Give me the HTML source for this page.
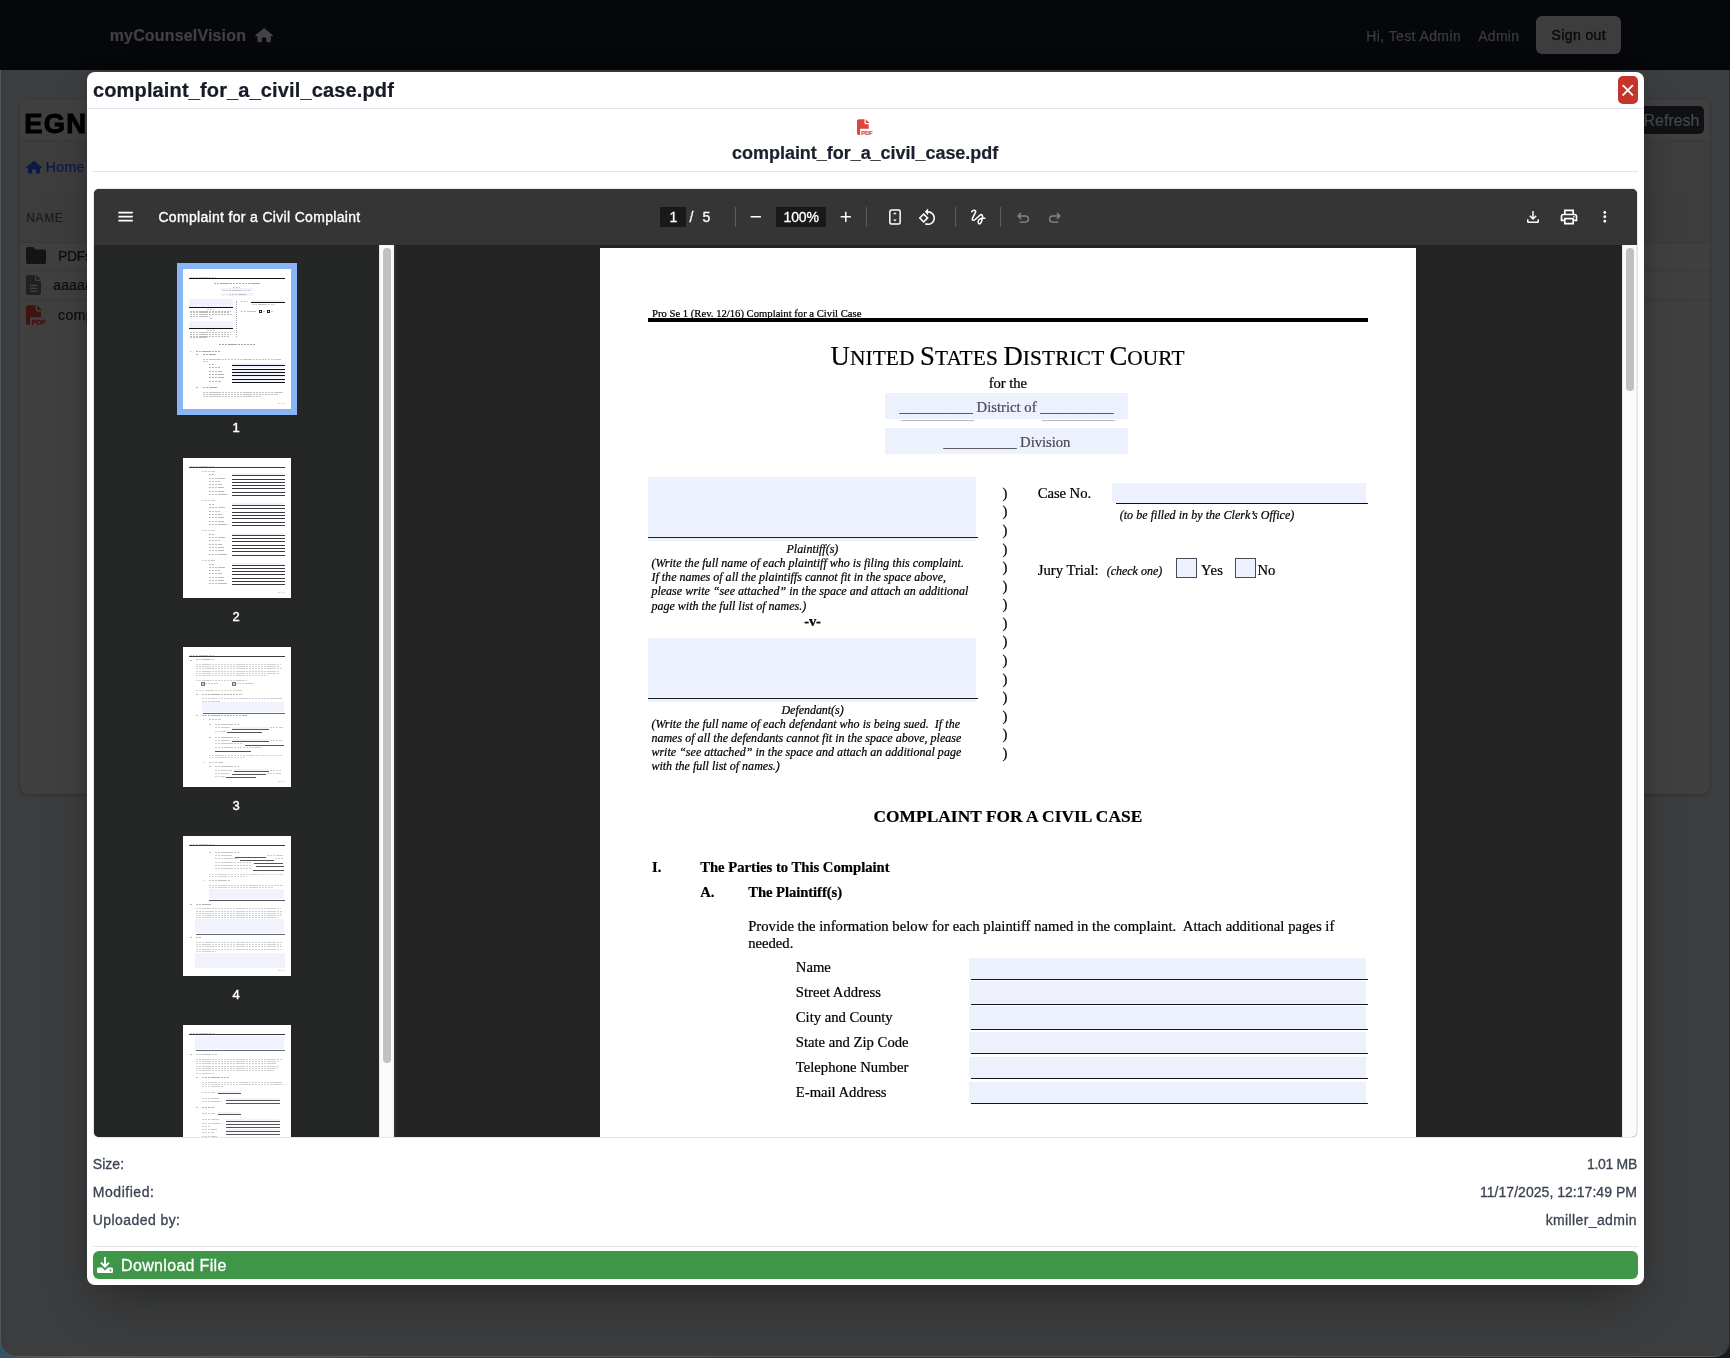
<!DOCTYPE html>
<html><head><meta charset="utf-8"><title>complaint_for_a_civil_case.pdf</title><style>
html,body{margin:0;padding:0}
body{width:1730px;height:1358px;overflow:hidden;position:relative;background:linear-gradient(90deg,#2b5568 0,#3f6b72 5%,#24424d 25%,#1c2f36 60%,#1d2a30 92%,#151b1e 100%);font-family:'Liberation Serif',serif;color:#000}
#win{will-change:transform;position:absolute;left:0;top:0;width:1730px;height:1356.500px;background:#3c3d3e;border-radius:0 0 16px 16px;overflow:hidden;box-shadow:inset 1px 0 0 #555658,inset -1px 0 0 #2c2c2d,inset 0 -1px 0 #58595b}
.b{position:absolute;display:block}
.t{position:absolute;white-space:pre;line-height:30px;-webkit-text-stroke:0.22px}
#vw{position:absolute;left:94px;top:189px;width:1543px;height:948px;border-radius:5px;overflow:hidden;background:#242424}
#vwi{position:absolute;left:-94px;top:-189px;width:1730px;height:1358px}
.b>i{position:absolute;display:block}
.b>i.w{opacity:.5;background:repeating-linear-gradient(90deg,currentColor 0,currentColor 2.3px,transparent 2.3px,transparent 3.1px)}
</style></head>
<body>
<div id=win><div class=b style="left:0.00px;top:0.00px;width:1730.00px;height:70.00px;background:#06070b;"></div>
<span class=t style="left:109.70px;top:21px;font-size:16px;font-family:'Liberation Sans',sans-serif;font-weight:bold;color:#414141;letter-spacing:0.162px;">myCounselVision</span>
<svg class=b style="left:254.80px;top:26.90px;" width="18.2" height="16" viewBox="0 0 20 16"><path fill='#434343' d='M10 .2L.3 8.4c-.4.4-.1 1 .4 1H2.6v5.5c0 .6.5 1.1 1.1 1.1h3.9v-4.6c0-.4.3-.7.7-.7h3.4c.4 0 .7.3.7.7V16h3.9c.6 0 1.1-.5 1.1-1.100V9.400h1.900c.5 0 .8-.6.4-1z'/></svg>
<span class=t style="left:1366.30px;top:21px;font-size:14px;font-family:'Liberation Sans',sans-serif;color:#3b3c3f;-webkit-text-stroke:0.25px;letter-spacing:0.398px;">Hi, Test Admin</span>
<span class=t style="left:1478.20px;top:21px;font-size:14px;font-family:'Liberation Sans',sans-serif;color:#3b3c3f;-webkit-text-stroke:0.25px;letter-spacing:0.282px;">Admin</span>
<div class=b style="left:1536.00px;top:16.00px;width:85.00px;height:38.00px;background:#3d3d3e;border-radius:6px;"></div>
<span class=t style="left:1551.60px;top:20px;font-size:14px;font-family:'Liberation Sans',sans-serif;color:#08090b;-webkit-text-stroke:0.3px;letter-spacing:0.378px;">Sign out</span>
<div class=b style="left:20.00px;top:100.00px;width:1690.00px;height:694.00px;background:#404040;border-radius:8px;box-shadow:0 1px 3px rgba(0,0,0,.25);"></div>
<div class=b style="left:20.00px;top:140.00px;width:1690.00px;height:53.00px;background:#3e3e3f;"></div>
<div class=b style="left:20.00px;top:140.00px;width:1690.00px;height:1.00px;background:#393939;"></div>
<div class=b style="left:20.00px;top:193.00px;width:1690.00px;height:1.00px;background:#393939;"></div>
<div class=b style="left:20.00px;top:193.00px;width:1690.00px;height:49.00px;background:#3d3d3d;"></div>
<div class=b style="left:20.00px;top:241.60px;width:1690.00px;height:1.00px;background:#393939;"></div>
<div class=b style="left:20.00px;top:270.00px;width:1690.00px;height:1.00px;background:#393939;"></div>
<div class=b style="left:20.00px;top:299.80px;width:1690.00px;height:1.00px;background:#393939;"></div>
<span class=t style="left:24.20px;top:109px;font-size:27.4px;font-family:'Liberation Sans',sans-serif;font-weight:bold;color:#000;-webkit-text-stroke:1.0px;letter-spacing:1.214px;">EGN</span>
<svg class=b style="left:25.80px;top:159.80px;" width="16.2" height="14" viewBox="0 0 20 16"><path fill='#0c1a46' d='M10 .2L.3 8.4c-.4.4-.1 1 .4 1H2.6v5.5c0 .6.5 1.1 1.1 1.1h3.9v-4.6c0-.4.3-.7.7-.7h3.4c.4 0 .7.3.7.7V16h3.9c.6 0 1.1-.5 1.1-1.100V9.400h1.900c.5 0 .8-.6.4-1z'/></svg>
<span class=t style="left:45.80px;top:152px;font-size:14px;font-family:'Liberation Sans',sans-serif;color:#0c1a46;-webkit-text-stroke:0.2px;letter-spacing:0.360px;">Home</span>
<span class=t style="left:26.20px;top:203px;font-size:12px;font-family:'Liberation Sans',sans-serif;color:#1b1c1f;-webkit-text-stroke:0.2px;letter-spacing:0.657px;">NAME</span>
<svg class=b style="left:26.00px;top:247.00px;" width="20" height="17" viewBox="0 0 20 17"><path fill='#131418' d='M2 0h5.200l2.300 2.400H18a2 2 0 0 1 2 2V15a2 2 0 0 1-2 2H2a2 2 0 0 1-2-2V2a2 2 0 0 1 2-2z'/></svg>
<span class=t style="left:58.00px;top:241px;font-size:14px;font-family:'Liberation Sans',sans-serif;color:#0d0e10;letter-spacing:-0.375px;">PDFs</span>
<svg class=b style="left:26.00px;top:274.70px;" width="15" height="20" viewBox="0 0 15 20"><path fill='#1f2024' d='M2 0h7v4.500c0 .8.700 1.500 1.500 1.500H15v12a2 2 0 0 1-2 2H2a2 2 0 0 1-2-2V2a2 2 0 0 1 2-2zM10.200 0L15 4.800h-4.800z'/><path stroke='#404040' stroke-width='1.300' d='M3.800 10.500h7.400M3.800 13.300h7.400M3.800 16.100h7.400'/></svg>
<span class=t style="left:53.20px;top:270px;font-size:14px;font-family:'Liberation Sans',sans-serif;color:#0d0e10;letter-spacing:0.172px;">aaaaa</span>
<svg class=b style="left:26.00px;top:304.50px;" width="20" height="20.3" viewBox="0 0 16 16"><path fill='#40130f' d='M2 0C.9 0 0 .9 0 2v12c0 1.100.9 2 2 2h1.200V9.600H12V5H8.800C8.200 5 7.700 4.500 7.700 3.900V0zM9 0v3.800h3.800z'/><text x='4.300' y='15.800' font-family="Liberation Sans,sans-serif" font-weight='bold' font-size='6.200' stroke='#40130f' stroke-width='.25' fill='#40130f' textLength='11.500' lengthAdjust='spacingAndGlyphs'>PDF</text></svg>
<span class=t style="left:58.00px;top:300px;font-size:14px;font-family:'Liberation Sans',sans-serif;color:#0d0e10;letter-spacing:0.453px;">complaint</span>
<div class=b style="left:1600.00px;top:106.00px;width:104.00px;height:28.00px;background:#0f1114;border-radius:5px;"></div>
<span class=t style="left:1643.60px;top:106px;font-size:16px;font-family:'Liberation Sans',sans-serif;color:#48494b;-webkit-text-stroke:0.2px;letter-spacing:-0.033px;">Refresh</span><div class=b style="left:87.00px;top:72.00px;width:1557.00px;height:1213.00px;background:#fff;border-radius:8px;box-shadow:0 25px 50px -12px rgba(0,0,0,.32),0 0 20px rgba(0,0,0,.1);"></div>
<span class=t style="left:93.00px;top:75px;font-size:20px;font-family:'Liberation Sans',sans-serif;font-weight:bold;color:#161b27;letter-spacing:0.140px;">complaint_for_a_civil_case.pdf</span>
<div class=b style="left:87.00px;top:108.00px;width:1557.00px;height:1.00px;background:#e3e6ec;"></div>
<div class=b style="left:1618.00px;top:76.00px;width:20.00px;height:28.00px;background:#c5352b;border-radius:5px;"></div>
<svg class=b style="left:1618.00px;top:76.00px;" width="20" height="28" viewBox="0 0 20 28"><path d='M5.200 9.700l9.200 9.200M14.400 9.700l-9.200 9.200' stroke='#fff' stroke-width='1.900' stroke-linecap='round'/></svg>
<svg class=b style="left:857.00px;top:119.20px;" width="15.6" height="16.2" viewBox="0 0 16 16"><path fill='#dc463d' d='M2 0C.9 0 0 .9 0 2v12c0 1.100.9 2 2 2h1.200V9.600H12V5H8.800C8.200 5 7.700 4.500 7.700 3.900V0zM9 0v3.800h3.800z'/><text x='4.300' y='15.800' font-family="Liberation Sans,sans-serif" font-weight='bold' font-size='6.200' stroke='#dc463d' stroke-width='.25' fill='#dc463d' textLength='11.500' lengthAdjust='spacingAndGlyphs'>PDF</text></svg>
<span class=t style="left:732.10px;top:138px;font-size:18px;font-family:'Liberation Sans',sans-serif;font-weight:bold;color:#1a202d;letter-spacing:-0.034px;">complaint_for_a_civil_case.pdf</span>
<div class=b style="left:93.00px;top:171.00px;width:1545.00px;height:1.00px;background:#e3e6ec;"></div>
<div class=b style="left:93.00px;top:188.00px;width:1545.00px;height:950.00px;background:#e3e6ec;border-radius:6px;"></div>
<div id=vw><div id=vwi><div class=b style="left:94.00px;top:245.00px;width:285.00px;height:892.00px;background:#252727;"></div>
<div class=b style="left:394.00px;top:245.00px;width:1228.00px;height:892.00px;background:#242424;"></div>
<div class=b style="left:394.00px;top:245.00px;width:3.00px;height:892.00px;background:linear-gradient(90deg,#3a3a3a,#242424);"></div>
<div class=b style="left:379.00px;top:245.00px;width:15.00px;height:892.00px;background:#fafafa;box-shadow:inset 1px 0 0 #e8e8e8,inset -1px 0 0 #ededed;"></div>
<div class=b style="left:383.00px;top:248.00px;width:8.00px;height:815.00px;background:#c1c1c1;border-radius:4px;"></div>
<div class=b style="left:1622.00px;top:245.00px;width:15.00px;height:892.00px;background:#fafafa;box-shadow:inset 1px 0 0 #e8e8e8,inset -1px 0 0 #ededed;"></div>
<div class=b style="left:1626.00px;top:248.00px;width:8.00px;height:143.00px;background:#c1c1c1;border-radius:4px;"></div>
<div class=b style="left:177.00px;top:263.00px;width:120.00px;height:152.00px;background:#8ab4f8;"></div>
<div class=b style="left:183px;top:269px;width:108px;height:140px;background:#fff;overflow:hidden"><i class=w style="left:7.0px;top:7.9px;width:26.0px;height:1.0px;color:#9a9a9a"></i><i style="left:6.2px;top:9.1px;width:95.8px;height:1.0px;background:#111"></i><i class=w style="left:30.5px;top:13.7px;width:47.0px;height:1.6px;color:#555"></i><i class=w style="left:50.0px;top:17.5px;width:7.0px;height:1.0px;color:#999"></i><i style="left:37.5px;top:19.2px;width:32.0px;height:3.3px;background:#f0f2fd"></i><i class=w style="left:40.0px;top:20.5px;width:27.0px;height:1.0px;color:#999"></i><i style="left:37.5px;top:23.6px;width:32.0px;height:3.4px;background:#f0f2fd"></i><i class=w style="left:46.0px;top:25.1px;width:17.0px;height:1.0px;color:#999"></i><i style="left:6.2px;top:30.3px;width:43.4px;height:7.9px;background:#f0f2fd"></i><i style="left:6.2px;top:38.1px;width:43.8px;height:1.1px;background:#111"></i><i style="left:6.2px;top:51.6px;width:43.4px;height:7.9px;background:#f0f2fd"></i><i style="left:6.2px;top:59.4px;width:43.8px;height:1.1px;background:#111"></i><i class=w style="left:24.0px;top:39.9px;width:7.0px;height:1.0px;color:#999"></i><i class=w style="left:7.0px;top:41.5px;width:41.0px;height:1.0px;color:#7a7a7a"></i><i class=w style="left:7.0px;top:43.4px;width:40.0px;height:1.0px;color:#7a7a7a"></i><i class=w style="left:7.0px;top:45.3px;width:42.0px;height:1.0px;color:#7a7a7a"></i><i class=w style="left:7.0px;top:47.2px;width:20.0px;height:1.0px;color:#7a7a7a"></i><i class=w style="left:27.0px;top:49.1px;width:2.5px;height:1.0px;color:#777"></i><i class=w style="left:24.0px;top:61.1px;width:8.0px;height:1.0px;color:#999"></i><i class=w style="left:7.0px;top:62.7px;width:41.0px;height:1.0px;color:#7a7a7a"></i><i class=w style="left:7.0px;top:64.6px;width:41.0px;height:1.0px;color:#7a7a7a"></i><i class=w style="left:7.0px;top:66.5px;width:40.0px;height:1.0px;color:#7a7a7a"></i><i class=w style="left:7.0px;top:68.4px;width:17.0px;height:1.0px;color:#7a7a7a"></i><i style="left:53.2px;top:32px;width:0;height:36px;border-left:1px dotted #a5a5a5"></i><i class=w style="left:58.0px;top:32.1px;width:7.0px;height:1.0px;color:#888"></i><i style="left:68.0px;top:31.2px;width:33.0px;height:1.8px;background:#f0f2fd"></i><i style="left:68.0px;top:33.1px;width:34.0px;height:1.1px;background:#111"></i><i class=w style="left:69.0px;top:35.1px;width:23.0px;height:1.0px;color:#888"></i><i class=w style="left:58.0px;top:42.4px;width:16.0px;height:1.0px;color:#888"></i><i style="left:76px;top:41.3px;width:3px;height:3px;background:#222"></i><i style="left:77px;top:42.3px;width:1px;height:1px;background:#fff"></i><i style="left:84px;top:41.3px;width:3px;height:3px;background:#222"></i><i style="left:85px;top:42.3px;width:1px;height:1px;background:#fff"></i><i class=w style="left:79.5px;top:42.4px;width:3.0px;height:1.0px;color:#888"></i><i class=w style="left:87.5px;top:42.4px;width:2.5px;height:1.0px;color:#888"></i><i class=w style="left:36.0px;top:74.8px;width:36.0px;height:1.3px;color:#444"></i><i class=w style="left:7.0px;top:81.8px;width:1.0px;height:1.0px;color:#555"></i><i class=w style="left:13.3px;top:81.8px;width:25.0px;height:1.0px;color:#555"></i><i class=w style="left:13.3px;top:84.9px;width:2.0px;height:1.0px;color:#555"></i><i class=w style="left:19.5px;top:84.9px;width:13.0px;height:1.0px;color:#555"></i><i class=w style="left:19.5px;top:89.7px;width:78.0px;height:1.0px;color:#8a8a8a"></i><i class=w style="left:19.5px;top:91.8px;width:6.0px;height:1.0px;color:#8a8a8a"></i><i class=w style="left:26.2px;top:95.1px;width:5.0px;height:1.0px;color:#6a6a6a"></i><i style="left:49.0px;top:94.0px;width:52.0px;height:2.1px;background:#f0f2fd"></i><i class=w style="left:26.2px;top:98.4px;width:11.0px;height:1.0px;color:#6a6a6a"></i><i style="left:49.0px;top:97.3px;width:52.0px;height:2.1px;background:#f0f2fd"></i><i class=w style="left:26.2px;top:101.7px;width:13.0px;height:1.0px;color:#6a6a6a"></i><i style="left:49.0px;top:100.6px;width:52.0px;height:2.1px;background:#f0f2fd"></i><i class=w style="left:26.2px;top:105.0px;width:15.0px;height:1.0px;color:#6a6a6a"></i><i style="left:49.0px;top:103.9px;width:52.0px;height:2.1px;background:#f0f2fd"></i><i class=w style="left:26.2px;top:108.3px;width:15.0px;height:1.0px;color:#6a6a6a"></i><i style="left:49.0px;top:107.2px;width:52.0px;height:2.1px;background:#f0f2fd"></i><i class=w style="left:26.2px;top:111.6px;width:12.0px;height:1.0px;color:#6a6a6a"></i><i style="left:49.0px;top:110.5px;width:52.0px;height:2.1px;background:#f0f2fd"></i><i style="left:49.3px;top:96.1px;width:52.7px;height:1.0px;background:#111"></i><i style="left:49.3px;top:99.9px;width:52.7px;height:1.0px;background:#111"></i><i style="left:49.3px;top:102.9px;width:52.7px;height:1.0px;background:#111"></i><i style="left:49.3px;top:106.0px;width:52.7px;height:1.0px;background:#111"></i><i style="left:49.3px;top:109.9px;width:52.7px;height:1.0px;background:#111"></i><i style="left:49.3px;top:112.9px;width:52.7px;height:1.0px;background:#111"></i><i class=w style="left:13.3px;top:118.1px;width:2.0px;height:1.0px;color:#555"></i><i class=w style="left:19.5px;top:118.1px;width:14.0px;height:1.0px;color:#555"></i><i class=w style="left:19.5px;top:122.7px;width:80.0px;height:1.0px;color:#8a8a8a"></i><i class=w style="left:19.5px;top:124.9px;width:75.0px;height:1.0px;color:#8a8a8a"></i><i class=w style="left:19.5px;top:127.1px;width:59.0px;height:1.0px;color:#8a8a8a"></i><i class=w style="left:95.0px;top:133.8px;width:7.0px;height:1.0px;color:#aaa"></i></div>
<span class=t style="left:232.60px;top:413px;font-size:13px;font-family:'Liberation Sans',sans-serif;color:#fff;-webkit-text-stroke:0.4px;">1</span>
<div class=b style="left:183px;top:458px;width:108px;height:140px;background:#fff;overflow:hidden"><i class=w style="left:7.0px;top:7.8px;width:25.0px;height:1.0px;color:#9a9a9a"></i><i style="left:6.2px;top:8.9px;width:95.8px;height:0.9px;background:#3a3a3a"></i><i class=w style="left:19.0px;top:12.5px;width:13.0px;height:1.0px;color:#999"></i><i class=w style="left:26.2px;top:15.8px;width:4.5px;height:1.0px;color:#777"></i><i style="left:49.3px;top:15.2px;width:51.7px;height:1.7px;background:#f0f2fd"></i><i style="left:49.3px;top:16.9px;width:52.7px;height:1.0px;background:#3a3a40"></i><i class=w style="left:26.2px;top:19.9px;width:15.5px;height:1.0px;color:#777"></i><i style="left:49.3px;top:21.0px;width:52.7px;height:1.0px;background:#3a3a40"></i><i class=w style="left:26.2px;top:22.8px;width:11.0px;height:1.0px;color:#777"></i><i style="left:49.3px;top:23.9px;width:52.7px;height:1.0px;background:#3a3a40"></i><i class=w style="left:26.2px;top:25.8px;width:13.0px;height:1.0px;color:#777"></i><i style="left:49.3px;top:26.9px;width:52.7px;height:1.0px;background:#3a3a40"></i><i class=w style="left:26.2px;top:28.7px;width:15.0px;height:1.0px;color:#777"></i><i style="left:49.3px;top:29.8px;width:52.7px;height:1.0px;background:#3a3a40"></i><i class=w style="left:26.2px;top:32.7px;width:15.0px;height:1.0px;color:#777"></i><i style="left:49.3px;top:33.8px;width:52.7px;height:1.0px;background:#3a3a40"></i><i class=w style="left:26.2px;top:35.8px;width:19.0px;height:1.0px;color:#777"></i><i style="left:49.3px;top:36.9px;width:52.7px;height:1.0px;background:#3a3a40"></i><i class=w style="left:19.0px;top:41.9px;width:13.0px;height:1.0px;color:#999"></i><i class=w style="left:26.2px;top:45.7px;width:4.5px;height:1.0px;color:#777"></i><i style="left:49.3px;top:45.1px;width:51.7px;height:1.7px;background:#f0f2fd"></i><i style="left:49.3px;top:46.8px;width:52.7px;height:1.0px;background:#3a3a40"></i><i class=w style="left:26.2px;top:48.8px;width:15.5px;height:1.0px;color:#777"></i><i style="left:49.3px;top:49.9px;width:52.7px;height:1.0px;background:#3a3a40"></i><i class=w style="left:26.2px;top:52.7px;width:11.0px;height:1.0px;color:#777"></i><i style="left:49.3px;top:53.8px;width:52.7px;height:1.0px;background:#3a3a40"></i><i class=w style="left:26.2px;top:55.7px;width:13.0px;height:1.0px;color:#777"></i><i style="left:49.3px;top:56.8px;width:52.7px;height:1.0px;background:#3a3a40"></i><i class=w style="left:26.2px;top:58.6px;width:15.0px;height:1.0px;color:#777"></i><i style="left:49.3px;top:59.7px;width:52.7px;height:1.0px;background:#3a3a40"></i><i class=w style="left:26.2px;top:62.8px;width:15.0px;height:1.0px;color:#777"></i><i style="left:49.3px;top:63.9px;width:52.7px;height:1.0px;background:#3a3a40"></i><i class=w style="left:26.2px;top:65.7px;width:19.0px;height:1.0px;color:#777"></i><i style="left:49.3px;top:66.8px;width:52.7px;height:1.0px;background:#3a3a40"></i><i class=w style="left:19.0px;top:71.7px;width:13.0px;height:1.0px;color:#999"></i><i class=w style="left:26.2px;top:75.9px;width:4.5px;height:1.0px;color:#777"></i><i style="left:49.3px;top:75.3px;width:51.7px;height:1.7px;background:#f0f2fd"></i><i style="left:49.3px;top:77.0px;width:52.7px;height:1.0px;background:#3a3a40"></i><i class=w style="left:26.2px;top:78.8px;width:15.5px;height:1.0px;color:#777"></i><i style="left:49.3px;top:79.9px;width:52.7px;height:1.0px;background:#3a3a40"></i><i class=w style="left:26.2px;top:81.8px;width:11.0px;height:1.0px;color:#777"></i><i style="left:49.3px;top:82.9px;width:52.7px;height:1.0px;background:#3a3a40"></i><i class=w style="left:26.2px;top:85.9px;width:13.0px;height:1.0px;color:#777"></i><i style="left:49.3px;top:87.0px;width:52.7px;height:1.0px;background:#3a3a40"></i><i class=w style="left:26.2px;top:88.8px;width:15.0px;height:1.0px;color:#777"></i><i style="left:49.3px;top:89.9px;width:52.7px;height:1.0px;background:#3a3a40"></i><i class=w style="left:26.2px;top:91.8px;width:15.0px;height:1.0px;color:#777"></i><i style="left:49.3px;top:92.9px;width:52.7px;height:1.0px;background:#3a3a40"></i><i class=w style="left:26.2px;top:95.7px;width:19.0px;height:1.0px;color:#777"></i><i style="left:49.3px;top:96.8px;width:52.7px;height:1.0px;background:#3a3a40"></i><i class=w style="left:19.0px;top:101.5px;width:13.0px;height:1.0px;color:#999"></i><i class=w style="left:26.2px;top:105.9px;width:4.5px;height:1.0px;color:#777"></i><i style="left:49.3px;top:105.3px;width:51.7px;height:1.7px;background:#f0f2fd"></i><i style="left:49.3px;top:107.0px;width:52.7px;height:1.0px;background:#3a3a40"></i><i class=w style="left:26.2px;top:108.9px;width:15.5px;height:1.0px;color:#777"></i><i style="left:49.3px;top:110.0px;width:52.7px;height:1.0px;background:#3a3a40"></i><i class=w style="left:26.2px;top:111.8px;width:11.0px;height:1.0px;color:#777"></i><i style="left:49.3px;top:112.9px;width:52.7px;height:1.0px;background:#3a3a40"></i><i class=w style="left:26.2px;top:114.7px;width:13.0px;height:1.0px;color:#777"></i><i style="left:49.3px;top:115.8px;width:52.7px;height:1.0px;background:#3a3a40"></i><i class=w style="left:26.2px;top:118.9px;width:15.0px;height:1.0px;color:#777"></i><i style="left:49.3px;top:120.0px;width:52.7px;height:1.0px;background:#3a3a40"></i><i class=w style="left:26.2px;top:121.8px;width:15.0px;height:1.0px;color:#777"></i><i style="left:49.3px;top:122.9px;width:52.7px;height:1.0px;background:#3a3a40"></i><i class=w style="left:26.2px;top:124.8px;width:19.0px;height:1.0px;color:#777"></i><i style="left:49.3px;top:125.9px;width:52.7px;height:1.0px;background:#3a3a40"></i><i class=w style="left:95.0px;top:133.8px;width:7.0px;height:1.0px;color:#aaa"></i></div>
<span class=t style="left:232.60px;top:602px;font-size:13px;font-family:'Liberation Sans',sans-serif;color:#fff;-webkit-text-stroke:0.4px;">2</span>
<div class=b style="left:183px;top:647px;width:108px;height:140px;background:#fff;overflow:hidden"><i class=w style="left:7.0px;top:7.8px;width:25.0px;height:1.0px;color:#9a9a9a"></i><i style="left:6.2px;top:8.9px;width:95.8px;height:0.9px;background:#3a3a3a"></i><i class=w style="left:7.4px;top:12.5px;width:2.0px;height:1.0px;color:#777"></i><i class=w style="left:13.3px;top:12.4px;width:18.0px;height:1.1px;color:#777"></i><i class=w style="left:13.3px;top:16.7px;width:85.0px;height:1.0px;color:#a2a2a2"></i><i class=w style="left:13.3px;top:19.0px;width:84.0px;height:1.0px;color:#a2a2a2"></i><i class=w style="left:13.3px;top:21.3px;width:86.0px;height:1.0px;color:#a2a2a2"></i><i class=w style="left:13.3px;top:23.6px;width:83.0px;height:1.0px;color:#a2a2a2"></i><i class=w style="left:13.3px;top:25.9px;width:83.0px;height:1.0px;color:#a2a2a2"></i><i class=w style="left:13.3px;top:28.2px;width:72.0px;height:1.0px;color:#a2a2a2"></i><i class=w style="left:13.3px;top:32.8px;width:51.0px;height:1.0px;color:#a2a2a2"></i><i style="left:17.6px;top:34.6px;width:2.4px;height:2.4px;background:#c9cbd8;border:0.5px solid #777"></i><i class=w style="left:21.6px;top:35.7px;width:13.0px;height:1.0px;color:#999"></i><i style="left:48.5px;top:34.6px;width:2.4px;height:2.4px;background:#c9cbd8;border:0.5px solid #777"></i><i class=w style="left:52.5px;top:35.7px;width:18.0px;height:1.0px;color:#999"></i><i class=w style="left:13.3px;top:42.5px;width:46.0px;height:1.0px;color:#a8a8a8"></i><i class=w style="left:13.3px;top:46.9px;width:2.0px;height:1.0px;color:#777"></i><i class=w style="left:19.0px;top:46.9px;width:41.0px;height:1.0px;color:#666"></i><i class=w style="left:19.0px;top:51.3px;width:81.0px;height:1.0px;color:#a2a2a2"></i><i class=w style="left:19.0px;top:53.7px;width:18.0px;height:1.0px;color:#a2a2a2"></i><i style="left:19.0px;top:55.2px;width:82.0px;height:10.3px;background:#f0f2fd"></i><i style="left:20.0px;top:65.9px;width:82.0px;height:1.0px;background:#666a78"></i><i class=w style="left:13.3px;top:68.0px;width:2.0px;height:1.0px;color:#777"></i><i class=w style="left:19.0px;top:68.0px;width:45.0px;height:1.0px;color:#666"></i><i class=w style="left:19.5px;top:72.4px;width:1.5px;height:1.0px;color:#888"></i><i class=w style="left:26.0px;top:72.4px;width:12.0px;height:1.0px;color:#888"></i><i class=w style="left:26.0px;top:77.0px;width:1.5px;height:1.0px;color:#888"></i><i class=w style="left:32.0px;top:77.0px;width:24.0px;height:1.0px;color:#888"></i><i class=w style="left:32.0px;top:80.2px;width:15.0px;height:1.0px;color:#999"></i><i style="left:49.3px;top:79.6px;width:36.7px;height:2.0px;background:#f0f2fd"></i><i style="left:49.3px;top:82.0px;width:36.9px;height:1.0px;background:#555"></i><i class=w style="left:87.0px;top:80.2px;width:13.0px;height:1.0px;color:#999"></i><i class=w style="left:32.0px;top:83.6px;width:11.0px;height:1.0px;color:#999"></i><i style="left:44.2px;top:84.9px;width:34.6px;height:1.0px;background:#555"></i><i class=w style="left:26.0px;top:89.8px;width:1.5px;height:1.0px;color:#888"></i><i class=w style="left:32.0px;top:89.8px;width:24.0px;height:1.0px;color:#888"></i><i class=w style="left:32.0px;top:93.0px;width:15.0px;height:1.0px;color:#999"></i><i style="left:49.3px;top:92.3px;width:36.7px;height:1.7px;background:#f0f2fd"></i><i style="left:49.3px;top:94.1px;width:36.9px;height:1.0px;background:#555"></i><i class=w style="left:87.0px;top:93.0px;width:12.0px;height:1.0px;color:#999"></i><i class=w style="left:32.0px;top:96.3px;width:28.0px;height:1.0px;color:#999"></i><i style="left:62.3px;top:98.0px;width:38.6px;height:1.0px;background:#555"></i><i class=w style="left:32.0px;top:99.8px;width:46.0px;height:1.0px;color:#999"></i><i style="left:32.0px;top:103.9px;width:36.0px;height:1.0px;background:#555"></i><i class=w style="left:26.0px;top:108.0px;width:73.0px;height:1.0px;color:#aaa"></i><i class=w style="left:26.0px;top:110.3px;width:37.0px;height:1.0px;color:#aaa"></i><i class=w style="left:19.5px;top:114.7px;width:1.5px;height:1.0px;color:#888"></i><i class=w style="left:26.0px;top:114.7px;width:14.0px;height:1.0px;color:#888"></i><i class=w style="left:26.0px;top:119.2px;width:1.5px;height:1.0px;color:#888"></i><i class=w style="left:32.0px;top:119.2px;width:25.0px;height:1.0px;color:#888"></i><i class=w style="left:32.0px;top:122.5px;width:17.0px;height:1.0px;color:#999"></i><i style="left:51.0px;top:121.8px;width:35.0px;height:1.8px;background:#f0f2fd"></i><i style="left:51.3px;top:123.9px;width:34.9px;height:1.0px;background:#555"></i><i class=w style="left:87.0px;top:122.5px;width:11.0px;height:1.0px;color:#999"></i><i class=w style="left:32.0px;top:125.7px;width:14.0px;height:1.0px;color:#999"></i><i style="left:49.3px;top:126.9px;width:33.7px;height:1.0px;background:#555"></i><i class=w style="left:84.0px;top:125.7px;width:14.0px;height:1.0px;color:#999"></i><i class=w style="left:32.0px;top:129.0px;width:10.0px;height:1.0px;color:#999"></i><i style="left:43.0px;top:129.8px;width:30.2px;height:1.0px;background:#555"></i><i class=w style="left:95.0px;top:133.8px;width:7.0px;height:1.0px;color:#aaa"></i></div>
<span class=t style="left:232.60px;top:791px;font-size:13px;font-family:'Liberation Sans',sans-serif;color:#fff;-webkit-text-stroke:0.4px;">3</span>
<div class=b style="left:183px;top:836px;width:108px;height:140px;background:#fff;overflow:hidden"><i class=w style="left:7.0px;top:7.8px;width:25.0px;height:1.0px;color:#9a9a9a"></i><i style="left:6.2px;top:8.9px;width:95.8px;height:0.9px;background:#3a3a3a"></i><i class=w style="left:26.0px;top:15.6px;width:1.5px;height:1.0px;color:#888"></i><i class=w style="left:32.0px;top:15.6px;width:25.0px;height:1.0px;color:#888"></i><i class=w style="left:32.0px;top:19.0px;width:17.0px;height:1.0px;color:#999"></i><i style="left:52.3px;top:20.9px;width:30.7px;height:1.0px;background:#555"></i><i class=w style="left:84.0px;top:19.0px;width:16.0px;height:1.0px;color:#999"></i><i class=w style="left:32.0px;top:22.2px;width:23.0px;height:1.0px;color:#999"></i><i style="left:57.4px;top:23.9px;width:33.5px;height:1.0px;background:#555"></i><i class=w style="left:92.0px;top:22.2px;width:8.0px;height:1.0px;color:#999"></i><i class=w style="left:32.0px;top:25.5px;width:37.0px;height:1.0px;color:#999"></i><i style="left:71.4px;top:27.0px;width:28.6px;height:1.0px;background:#555"></i><i class=w style="left:32.0px;top:28.7px;width:37.0px;height:1.0px;color:#999"></i><i style="left:73.2px;top:30.0px;width:27.8px;height:1.0px;background:#555"></i><i class=w style="left:32.0px;top:32.0px;width:36.0px;height:1.0px;color:#999"></i><i style="left:70.3px;top:33.9px;width:30.7px;height:1.0px;background:#555"></i><i class=w style="left:26.0px;top:37.7px;width:74.0px;height:1.0px;color:#aaa"></i><i class=w style="left:26.0px;top:39.9px;width:38.0px;height:1.0px;color:#aaa"></i><i class=w style="left:19.5px;top:44.3px;width:1.5px;height:1.0px;color:#888"></i><i class=w style="left:26.0px;top:44.3px;width:22.0px;height:1.0px;color:#888"></i><i class=w style="left:26.0px;top:48.6px;width:74.0px;height:1.0px;color:#a2a2a2"></i><i class=w style="left:26.0px;top:51.3px;width:65.0px;height:1.0px;color:#a2a2a2"></i><i style="left:26.2px;top:53.2px;width:74.8px;height:9.6px;background:#f0f2fd"></i><i style="left:26.2px;top:63.9px;width:75.8px;height:1.1px;background:#555"></i><i class=w style="left:7.4px;top:67.7px;width:2.5px;height:1.0px;color:#777"></i><i class=w style="left:13.3px;top:67.7px;width:16.0px;height:1.1px;color:#666"></i><i class=w style="left:13.3px;top:72.2px;width:85.0px;height:1.0px;color:#a2a2a2"></i><i class=w style="left:13.3px;top:74.5px;width:86.0px;height:1.0px;color:#a2a2a2"></i><i class=w style="left:13.3px;top:76.8px;width:87.0px;height:1.0px;color:#a2a2a2"></i><i class=w style="left:13.3px;top:79.1px;width:86.0px;height:1.0px;color:#a2a2a2"></i><i class=w style="left:13.3px;top:81.4px;width:82.0px;height:1.0px;color:#a2a2a2"></i><i style="left:12.2px;top:83.0px;width:88.8px;height:13.7px;background:#f0f2fd"></i><i style="left:13.3px;top:97.8px;width:88.7px;height:1.1px;background:#666a78"></i><i class=w style="left:7.4px;top:101.3px;width:2.5px;height:1.0px;color:#777"></i><i class=w style="left:13.3px;top:101.2px;width:5.0px;height:1.1px;color:#666"></i><i class=w style="left:13.3px;top:105.7px;width:86.0px;height:1.0px;color:#a2a2a2"></i><i class=w style="left:13.3px;top:108.0px;width:85.0px;height:1.0px;color:#a2a2a2"></i><i class=w style="left:13.3px;top:110.4px;width:86.0px;height:1.0px;color:#a2a2a2"></i><i class=w style="left:13.3px;top:112.8px;width:85.0px;height:1.0px;color:#a2a2a2"></i><i class=w style="left:13.3px;top:115.1px;width:20.0px;height:1.0px;color:#a2a2a2"></i><i style="left:12.2px;top:117.0px;width:89.8px;height:14.6px;background:#f0f2fd"></i><i class=w style="left:95.0px;top:133.8px;width:7.0px;height:1.0px;color:#aaa"></i></div>
<span class=t style="left:232.60px;top:980px;font-size:13px;font-family:'Liberation Sans',sans-serif;color:#fff;-webkit-text-stroke:0.4px;">4</span>
<div class=b style="left:183px;top:1025px;width:108px;height:140px;background:#fff;overflow:hidden"><i class=w style="left:7.0px;top:7.8px;width:25.0px;height:1.0px;color:#9a9a9a"></i><i style="left:6.2px;top:8.9px;width:95.8px;height:0.9px;background:#3a3a3a"></i><i style="left:12.1px;top:11.3px;width:88.9px;height:12.9px;background:#f0f2fd"></i><i style="left:13.0px;top:24.9px;width:89.0px;height:1.1px;background:#666a78"></i><i class=w style="left:6.8px;top:29.4px;width:2.0px;height:1.0px;color:#777"></i><i class=w style="left:13.0px;top:29.3px;width:21.0px;height:1.1px;color:#888"></i><i class=w style="left:13.0px;top:33.8px;width:87.0px;height:1.0px;color:#a2a2a2"></i><i class=w style="left:13.0px;top:36.1px;width:82.0px;height:1.0px;color:#a2a2a2"></i><i class=w style="left:13.0px;top:38.4px;width:80.0px;height:1.0px;color:#a2a2a2"></i><i class=w style="left:13.0px;top:40.6px;width:84.0px;height:1.0px;color:#a2a2a2"></i><i class=w style="left:13.0px;top:42.9px;width:82.0px;height:1.0px;color:#a2a2a2"></i><i class=w style="left:13.0px;top:45.2px;width:78.0px;height:1.0px;color:#a2a2a2"></i><i class=w style="left:13.0px;top:47.5px;width:19.0px;height:1.0px;color:#a2a2a2"></i><i class=w style="left:13.0px;top:51.7px;width:2.0px;height:1.0px;color:#777"></i><i class=w style="left:19.0px;top:51.7px;width:28.0px;height:1.0px;color:#666"></i><i class=w style="left:19.0px;top:56.5px;width:81.0px;height:1.0px;color:#a2a2a2"></i><i class=w style="left:19.0px;top:58.6px;width:82.0px;height:1.0px;color:#a2a2a2"></i><i class=w style="left:19.0px;top:60.8px;width:22.0px;height:1.0px;color:#a2a2a2"></i><i class=w style="left:19.0px;top:66.5px;width:13.0px;height:1.0px;color:#999"></i><i style="left:35.0px;top:65.9px;width:22.0px;height:1.8px;background:#f0f2fd"></i><i style="left:35.0px;top:68.0px;width:23.0px;height:1.0px;background:#555"></i><i class=w style="left:19.0px;top:72.8px;width:17.0px;height:1.0px;color:#999"></i><i style="left:43.0px;top:72.9px;width:53.0px;height:1.8px;background:#f0f2fd"></i><i style="left:43.0px;top:75.0px;width:54.0px;height:1.0px;background:#555"></i><i class=w style="left:19.0px;top:76.4px;width:20.0px;height:1.0px;color:#999"></i><i style="left:43.0px;top:78.0px;width:54.0px;height:1.0px;background:#555"></i><i class=w style="left:13.0px;top:81.9px;width:2.0px;height:1.0px;color:#777"></i><i class=w style="left:19.0px;top:81.9px;width:12.0px;height:1.0px;color:#666"></i><i class=w style="left:19.0px;top:87.6px;width:13.0px;height:1.0px;color:#999"></i><i style="left:35.0px;top:86.8px;width:22.0px;height:1.8px;background:#f0f2fd"></i><i style="left:35.0px;top:88.9px;width:23.0px;height:1.0px;background:#555"></i><i class=w style="left:19.0px;top:93.9px;width:17.0px;height:1.0px;color:#999"></i><i style="left:43.0px;top:93.9px;width:53.0px;height:1.8px;background:#f0f2fd"></i><i style="left:43.0px;top:96.0px;width:54.0px;height:1.0px;background:#555"></i><i class=w style="left:19.0px;top:97.5px;width:20.0px;height:1.0px;color:#999"></i><i style="left:43.0px;top:99.0px;width:54.0px;height:1.0px;background:#555"></i><i class=w style="left:19.0px;top:100.6px;width:9.0px;height:1.0px;color:#999"></i><i style="left:43.0px;top:102.0px;width:54.0px;height:1.0px;background:#555"></i><i class=w style="left:19.0px;top:103.9px;width:15.0px;height:1.0px;color:#999"></i><i style="left:43.0px;top:103.8px;width:53.0px;height:1.8px;background:#f0f2fd"></i><i style="left:43.0px;top:105.9px;width:54.0px;height:1.0px;background:#555"></i><i class=w style="left:19.0px;top:107.4px;width:12.0px;height:1.0px;color:#999"></i><i style="left:43.0px;top:108.9px;width:54.0px;height:1.0px;background:#555"></i><i class=w style="left:19.0px;top:110.6px;width:15.0px;height:1.0px;color:#999"></i><i style="left:43.0px;top:112.1px;width:54.0px;height:1.0px;background:#555"></i></div>
<span class=t style="left:232.60px;top:1169px;font-size:13px;font-family:'Liberation Sans',sans-serif;color:#fff;-webkit-text-stroke:0.4px;">5</span>
<div class=b style="left:600.00px;top:248.00px;width:816.00px;height:1056.00px;background:#fff;"></div>
<span class=t style="left:652.00px;top:299px;font-size:10.667px;">Pro Se 1 (Rev. 12/16) Complaint for a Civil Case</span>
<div class=b style="left:648.00px;top:318.25px;width:720.00px;height:3.50px;background:#000;"></div>
<span class=t style="left:830.50px;top:341px;font-size:21.333px;letter-spacing:0.134px;"><span style="font-size:26.667px">U</span>NITED <span style="font-size:26.667px">S</span>TATES <span style="font-size:26.667px">D</span>ISTRICT <span style="font-size:26.667px">C</span>OURT</span>
<span class=t style="left:988.70px;top:368px;font-size:14.667px;letter-spacing:-0.067px;">for the</span>
<div class=b style="left:885.00px;top:393.20px;width:243.00px;height:25.60px;background:#edf0fd;"></div>
<div class=b style="left:885.00px;top:428.20px;width:243.00px;height:25.60px;background:#edf0fd;"></div>
<span class=t style="left:899.50px;top:392px;font-size:14.667px;color:#4b4b55;letter-spacing:0.014px;">__________ District of __________</span>
<div class=b style="left:900.60px;top:419.70px;width:73.20px;height:0.80px;background:#b9b9b9;"></div>
<div class=b style="left:1041.80px;top:419.70px;width:73.20px;height:0.80px;background:#b9b9b9;"></div>
<span class=t style="left:943.40px;top:427px;font-size:14.667px;color:#4b4b55;letter-spacing:-0.023px;">__________ Division</span>
<div class=b style="left:648.00px;top:477.10px;width:328.00px;height:63.70px;background:#edf0fd;"></div>
<div class=b style="left:648.00px;top:536.50px;width:330.20px;height:1.10px;background:#1c1c22;"></div>
<div class=b style="left:648.00px;top:638.20px;width:328.00px;height:63.70px;background:#edf0fd;"></div>
<div class=b style="left:648.00px;top:697.60px;width:330.20px;height:1.10px;background:#1c1c22;"></div>
<span class=t style="left:786.50px;top:534px;font-size:12px;font-style:italic;letter-spacing:-0.017px;">Plaintiff(s)</span>
<span class=t style="left:651.40px;top:548px;font-size:12px;font-style:italic;letter-spacing:0.019px;">(Write the full name of each plaintiff who is filing this complaint.</span>
<span class=t style="left:651.40px;top:562px;font-size:12px;font-style:italic;letter-spacing:0.015px;">If the names of all the plaintiffs cannot fit in the space above,</span>
<span class=t style="left:651.40px;top:576px;font-size:12px;font-style:italic;letter-spacing:0.016px;">please write “see attached” in the space and attach an additional</span>
<span class=t style="left:651.40px;top:591px;font-size:12px;font-style:italic;letter-spacing:0.017px;">page with the full list of names.)</span>
<span class=t style="left:804.30px;top:606px;font-size:14.667px;font-weight:bold;letter-spacing:-0.198px;">-v-</span>
<span class=t style="left:781.50px;top:695px;font-size:12px;font-style:italic;letter-spacing:-0.046px;">Defendant(s)</span>
<span class=t style="left:651.40px;top:709px;font-size:12px;font-style:italic;letter-spacing:0.031px;">(Write the full name of each defendant who is being sued.  If the</span>
<span class=t style="left:651.40px;top:723px;font-size:12px;font-style:italic;letter-spacing:0.020px;">names of all the defendants cannot fit in the space above, please</span>
<span class=t style="left:651.40px;top:737px;font-size:12px;font-style:italic;letter-spacing:0.020px;">write “see attached” in the space and attach an additional page</span>
<span class=t style="left:651.40px;top:751px;font-size:12px;font-style:italic;letter-spacing:0.017px;">with the full list of names.)</span>
<span class=t style="left:1002.40px;top:478px;font-size:14.667px;">)</span>
<span class=t style="left:1002.40px;top:496px;font-size:14.667px;">)</span>
<span class=t style="left:1002.40px;top:515px;font-size:14.667px;">)</span>
<span class=t style="left:1002.40px;top:534px;font-size:14.667px;">)</span>
<span class=t style="left:1002.40px;top:552px;font-size:14.667px;">)</span>
<span class=t style="left:1002.40px;top:571px;font-size:14.667px;">)</span>
<span class=t style="left:1002.40px;top:589px;font-size:14.667px;">)</span>
<span class=t style="left:1002.40px;top:608px;font-size:14.667px;">)</span>
<span class=t style="left:1002.40px;top:626px;font-size:14.667px;">)</span>
<span class=t style="left:1002.40px;top:645px;font-size:14.667px;">)</span>
<span class=t style="left:1002.40px;top:664px;font-size:14.667px;">)</span>
<span class=t style="left:1002.40px;top:682px;font-size:14.667px;">)</span>
<span class=t style="left:1002.40px;top:701px;font-size:14.667px;">)</span>
<span class=t style="left:1002.40px;top:719px;font-size:14.667px;">)</span>
<span class=t style="left:1002.40px;top:738px;font-size:14.667px;">)</span>
<span class=t style="left:1037.80px;top:478px;font-size:14.667px;letter-spacing:-0.067px;">Case No.</span>
<div class=b style="left:1112.00px;top:482.80px;width:254.00px;height:19.80px;background:#edf0fd;"></div>
<div class=b style="left:1116.00px;top:503.00px;width:252.00px;height:1.00px;background:#111;"></div>
<span class=t style="left:1119.70px;top:500px;font-size:12px;font-style:italic;letter-spacing:0.050px;">(to be filled in by the Clerk’s Office)</span>
<span class=t style="left:1037.80px;top:555px;font-size:14.667px;letter-spacing:0.010px;">Jury Trial:</span>
<span class=t style="left:1106.70px;top:556px;font-size:12px;font-style:italic;letter-spacing:-0.011px;">(check one)</span>
<div class=b style="left:1176.10px;top:558.00px;width:20.50px;height:20.00px;background:#edf0fd;box-sizing:border-box;border:1.2px solid #4a4a58;"></div>
<div class=b style="left:1235.30px;top:558.00px;width:20.50px;height:20.00px;background:#edf0fd;box-sizing:border-box;border:1.2px solid #4a4a58;"></div>
<span class=t style="left:1201.00px;top:555px;font-size:14.667px;letter-spacing:0.291px;">Yes</span>
<span class=t style="left:1257.60px;top:555px;font-size:14.667px;letter-spacing:-0.061px;">No</span>
<span class=t style="left:873.50px;top:802px;font-size:17.333px;font-weight:bold;letter-spacing:0.055px;">COMPLAINT FOR A CIVIL CASE</span>
<span class=t style="left:652.10px;top:852px;font-size:14.667px;font-weight:bold;">I.</span>
<span class=t style="left:700.20px;top:852px;font-size:14.667px;font-weight:bold;">The Parties to This Complaint</span>
<span class=t style="left:700.20px;top:877px;font-size:14.667px;font-weight:bold;">A.</span>
<span class=t style="left:748.20px;top:877px;font-size:14.667px;font-weight:bold;letter-spacing:-0.066px;">The Plaintiff(s)</span>
<span class=t style="left:748.20px;top:911px;font-size:14.667px;letter-spacing:0.019px;">Provide the information below for each plaintiff named in the complaint.  Attach additional pages if</span>
<span class=t style="left:748.20px;top:928px;font-size:14.667px;">needed.</span>
<span class=t style="left:795.80px;top:952px;font-size:14.667px;">Name</span>
<div class=b style="left:969.00px;top:958.10px;width:397.00px;height:21.50px;background:#edf0fd;"></div>
<div class=b style="left:971.00px;top:978.65px;width:396.80px;height:1.10px;background:#15151c;"></div>
<span class=t style="left:795.80px;top:977px;font-size:14.667px;">Street Address</span>
<div class=b style="left:969.00px;top:980.50px;width:397.00px;height:24.20px;background:#edf0fd;"></div>
<div class=b style="left:971.00px;top:1003.75px;width:396.80px;height:1.10px;background:#15151c;"></div>
<span class=t style="left:795.80px;top:1002px;font-size:14.667px;">City and County</span>
<div class=b style="left:969.00px;top:1005.70px;width:397.00px;height:24.00px;background:#edf0fd;"></div>
<div class=b style="left:971.00px;top:1028.75px;width:396.80px;height:1.10px;background:#15151c;"></div>
<span class=t style="left:795.80px;top:1027px;font-size:14.667px;">State and Zip Code</span>
<div class=b style="left:969.00px;top:1031.80px;width:397.00px;height:21.80px;background:#edf0fd;"></div>
<div class=b style="left:971.00px;top:1052.65px;width:396.80px;height:1.10px;background:#15151c;"></div>
<span class=t style="left:795.80px;top:1052px;font-size:14.667px;">Telephone Number</span>
<div class=b style="left:969.00px;top:1057.00px;width:397.00px;height:21.70px;background:#edf0fd;"></div>
<div class=b style="left:971.00px;top:1077.75px;width:396.80px;height:1.10px;background:#15151c;"></div>
<span class=t style="left:795.80px;top:1077px;font-size:14.667px;">E-mail Address</span>
<div class=b style="left:969.00px;top:1081.90px;width:397.00px;height:21.90px;background:#edf0fd;"></div>
<div class=b style="left:971.00px;top:1102.85px;width:396.80px;height:1.10px;background:#15151c;"></div>
<div class=b style="left:94.00px;top:189.00px;width:1543.00px;height:56.00px;background:#353535;"></div>
<svg class=b style="left:116.40px;top:207.40px;" width="19.2" height="19.2" viewBox="0 0 24 24"><path fill="#fff" d="M3 18h18v-2H3v2zm0-5h18v-2H3v2zm0-7v2h18V6H3z"/></svg>
<span class=t style="left:158.40px;top:202px;font-size:14px;font-family:'Liberation Sans',sans-serif;color:#fff;-webkit-text-stroke:0.35px;letter-spacing:0.323px;">Complaint for a Civil Complaint</span>
<div class=b style="left:660.00px;top:207.00px;width:26.00px;height:20.00px;background:#191919;"></div>
<span class=t style="left:669.60px;top:202px;font-size:14px;font-family:'Liberation Sans',sans-serif;color:#fff;-webkit-text-stroke:0.3px;">1</span>
<span class=t style="left:689.60px;top:202px;font-size:14px;font-family:'Liberation Sans',sans-serif;color:#fff;-webkit-text-stroke:0.3px;">/</span>
<span class=t style="left:702.50px;top:202px;font-size:14px;font-family:'Liberation Sans',sans-serif;color:#fff;-webkit-text-stroke:0.3px;">5</span>
<div class=b style="left:735.20px;top:207.00px;width:1.00px;height:20.00px;background:#5d5d5d;"></div>
<div class=b style="left:866.00px;top:207.00px;width:1.00px;height:20.00px;background:#5d5d5d;"></div>
<div class=b style="left:955.20px;top:207.00px;width:1.00px;height:20.00px;background:#5d5d5d;"></div>
<div class=b style="left:1000.20px;top:207.00px;width:1.00px;height:20.00px;background:#5d5d5d;"></div>
<svg class=b style="left:747.20px;top:208.20px;" width="17.6" height="17.6" viewBox="0 0 24 24"><path fill="#fff" d="M19 13H5v-2h14v2z"/></svg>
<div class=b style="left:776.00px;top:207.00px;width:50.00px;height:20.00px;background:#191919;"></div>
<span class=t style="left:783.60px;top:202px;font-size:14px;font-family:'Liberation Sans',sans-serif;color:#fff;-webkit-text-stroke:0.3px;letter-spacing:-0.153px;">100%</span>
<svg class=b style="left:837.20px;top:208.20px;" width="17.6" height="17.6" viewBox="0 0 24 24"><path fill="#fff" d="M19 13h-6v6h-2v-6H5v-2h6V5h2v6h6v2z"/></svg>
<svg class=b style="left:885.00px;top:207.00px;" width="20" height="20" viewBox="0 0 20 20"><rect x='4.85' y='3.05' width='10.3' height='13.9' rx='1.5' fill='none' stroke='#fff' stroke-width='1.5'/><path d='M9.9 5.3l1.8 1.9H8.1zM9.9 14.5l1.8-1.9H8.1z' fill='#fff'/></svg>
<svg class=b style="left:917.60px;top:208.40px;" width="18.6" height="18.6" viewBox="0 0 24 24"><path fill="#fff" d="M7.34 6.41L.86 12.9l6.49 6.48 6.49-6.48-6.5-6.49zM3.69 12.9l3.66-3.66L11 12.9l-3.66 3.66-3.65-3.66zm15.67-6.26C17.61 4.88 15.3 4 13 4V.76L8.76 5 13 9.24V6c1.79 0 3.58.68 4.95 2.05 2.73 2.73 2.73 7.17 0 9.9C16.58 19.32 14.79 20 13 20c-.97 0-1.94-.21-2.84-.61l-1.49 1.49C10.02 21.62 11.51 22 13 22c2.3 0 4.61-.88 6.36-2.64 3.52-3.51 3.52-9.21 0-12.72z"/></svg>
<svg class=b style="left:967.50px;top:207.00px;" width="20" height="20" viewBox="0 0 20 20"><path d='M3.7 4.7Q4.8 3.2 6.1 3.3Q8 3.6 7.6 5.2L4.4 11.4Q3.9 13 5.2 13.3Q6.2 13.4 7.2 12.5L12.3 7.9Q13.4 7.2 14.2 8.2Q15 9.4 14.4 11.4Q13.8 14.4 12.6 16.2Q11.6 17.4 10.5 16.2Q9.6 14.8 10.500 13.3Q11.5 12 13.5 11.5Q15.2 11.1 16.8 11.3' fill='none' stroke='#fff' stroke-width='1.55' stroke-linecap='round' stroke-linejoin='round'/></svg>
<svg class=b style="left:1014.60px;top:208.60px;" width="17" height="17" viewBox="0 0 20 20"><path d='M7.2 4.6L3.6 8.2l3.6 3.6M3.9 8.2h8.3a3.6 3.6 0 0 1 0 7.2H5.4' fill='none' stroke='#858585' stroke-width='1.6' stroke-linejoin='round'/></svg>
<svg class=b style="left:1046.30px;top:208.60px;transform:scaleX(-1);" width="17" height="17" viewBox="0 0 20 20"><path d='M7.2 4.6L3.6 8.2l3.6 3.6M3.9 8.2h8.3a3.6 3.6 0 0 1 0 7.2H5.4' fill='none' stroke='#858585' stroke-width='1.6' stroke-linejoin='round'/></svg>
<svg class=b style="left:1524.00px;top:207.60px;" width="18" height="18" viewBox="0 0 24 24"><path fill="#fff" d="M18 15v3H6v-3H4v3c0 1.1.9 2 2 2h12c1.1 0 2-.9 2-2v-3h-2zm-1-4l-1.41-1.41L13 12.17V4h-2v8.17L8.41 9.59 7 11l5 5 5-5z"/></svg>
<svg class=b style="left:1559.00px;top:207.00px;" width="20" height="20" viewBox="0 0 24 24"><path fill="#fff" d="M19 8h-1V3H6v5H5c-1.66 0-3 1.34-3 3v6h4v4h12v-4h4v-6c0-1.66-1.34-3-3-3zM8 5h8v3H8V5zm8 12v2H8v-4h8v2zm2-2v-2H6v2H4v-4c0-.55.45-1 1-1h14c.55 0 1 .45 1 1v4h-2z"/><circle cx='18' cy='11.5' r='1' fill='#fff'/></svg>
<svg class=b style="left:1596.20px;top:208.20px;" width="17.6" height="17.6" viewBox="0 0 24 24"><path fill="#fff" d="M12 8c1.1 0 2-.9 2-2s-.9-2-2-2-2 .9-2 2 .9 2 2 2zm0 2c-1.1 0-2 .9-2 2s.9 2 2 2 2-.9 2-2-.9-2-2-2zm0 6c-1.1 0-2 .9-2 2s.9 2 2 2 2-.9 2-2-.9-2-2-2z"/></svg></div></div>
<span class=t style="left:92.80px;top:1149px;font-size:14px;font-family:'Liberation Sans',sans-serif;color:#3b4353;-webkit-text-stroke:0.3px;letter-spacing:0.035px;">Size:</span>
<span class=t style="left:92.80px;top:1177px;font-size:14px;font-family:'Liberation Sans',sans-serif;color:#3b4353;-webkit-text-stroke:0.3px;letter-spacing:0.532px;">Modified:</span>
<span class=t style="left:92.80px;top:1205px;font-size:14px;font-family:'Liberation Sans',sans-serif;color:#3b4353;-webkit-text-stroke:0.3px;letter-spacing:0.424px;">Uploaded by:</span>
<span class=t style="left:1587.00px;top:1149px;font-size:14px;font-family:'Liberation Sans',sans-serif;color:#3b4353;-webkit-text-stroke:0.3px;letter-spacing:-0.306px;">1.01 MB</span>
<span class=t style="left:1480.00px;top:1177px;font-size:14px;font-family:'Liberation Sans',sans-serif;color:#3b4353;-webkit-text-stroke:0.3px;letter-spacing:0.035px;">11/17/2025, 12:17:49 PM</span>
<span class=t style="left:1545.70px;top:1205px;font-size:14px;font-family:'Liberation Sans',sans-serif;color:#3b4353;-webkit-text-stroke:0.3px;letter-spacing:0.380px;">kmiller_admin</span>
<div class=b style="left:93.00px;top:1246.00px;width:1545.00px;height:1.00px;background:#e3e6ec;"></div>
<div class=b style="left:93.00px;top:1251.00px;width:1545.00px;height:28.00px;background:#3f9649;border-radius:6px;"></div>
<svg class=b style="left:96.50px;top:1257.30px;" width="16" height="16" viewBox="0 0 16 16"><path fill='#fff' d='M7 0h2v7.200l2.300-2.300 1.400 1.400L8 11 3.300 6.300l1.400-1.400L7 7.200zM1.600 10.500h3.300L8 13.600l3.100-3.100h3.300c.9 0 1.600.7 1.600 1.600v2.300c0 .9-.7 1.600-1.600 1.600H1.600C.7 16 0 15.300 0 14.400v-2.300c0-.9.700-1.600 1.600-1.600zm11.900 2.100a.9.900 0 1 0 0 1.800.9.900 0 0 0 0-1.800z'/></svg>
<span class=t style="left:121.10px;top:1251px;font-size:16px;font-family:'Liberation Sans',sans-serif;color:#fff;-webkit-text-stroke:0.3px;letter-spacing:0.324px;">Download File</span></div>
</body></html>
